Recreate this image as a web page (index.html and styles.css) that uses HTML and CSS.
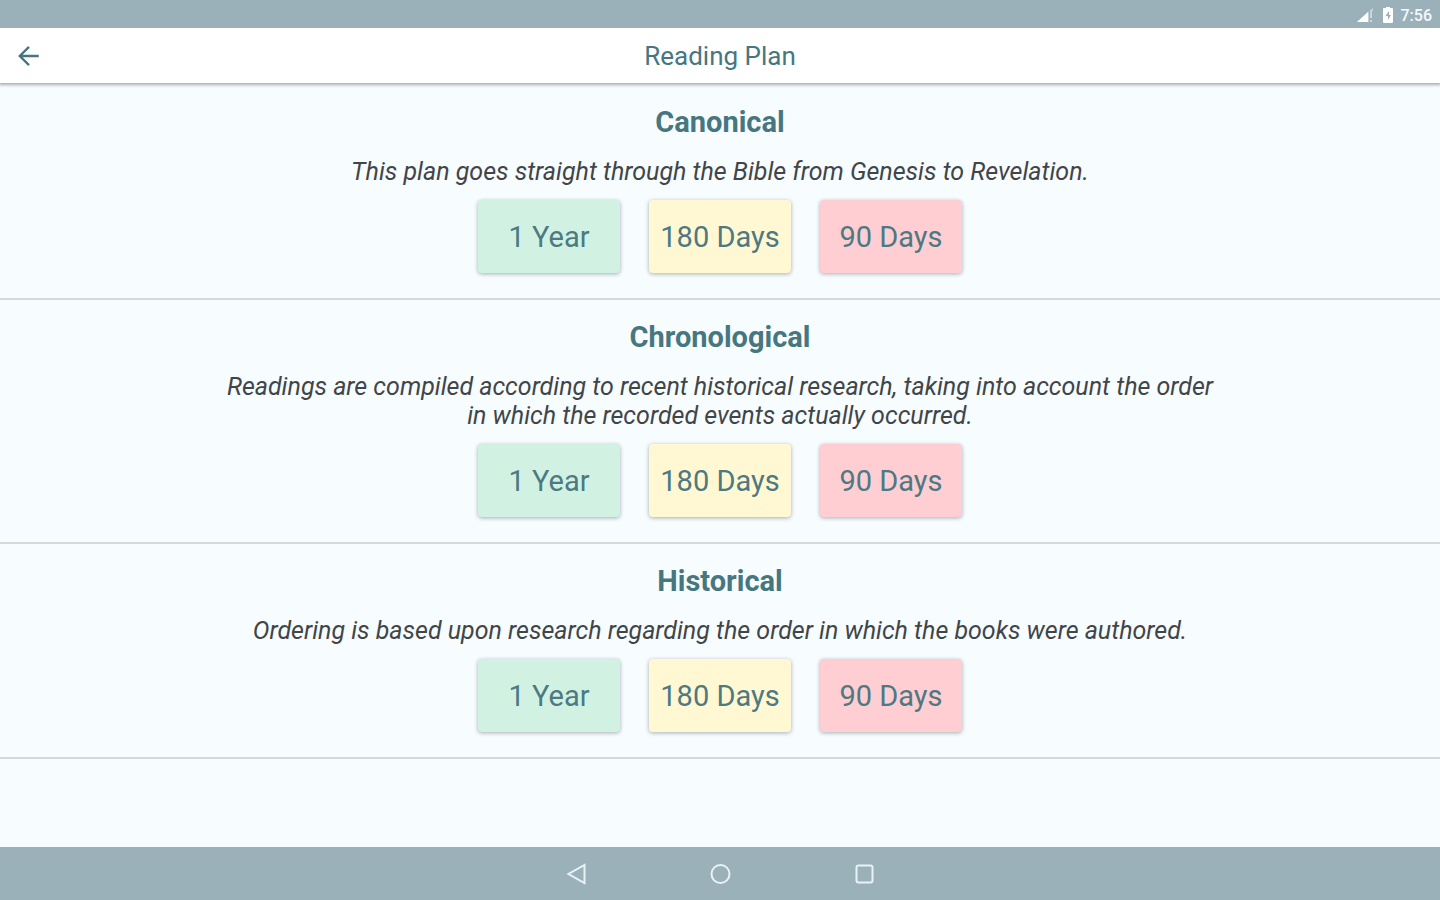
FILE: index.html
```html
<!DOCTYPE html>
<html lang="en">
<head>
<meta charset="utf-8">
<title>Reading Plan</title>
<link rel="stylesheet" href="styles.css">
</head>
<body>
<div class="status-bar">
  <svg class="signal" viewBox="0 0 18 16" aria-hidden="true"><path d="M0 15L16 1V15Z" fill="#c4d2d7"/><path d="M0 15L11 5V15Z" fill="#fff"/><path d="M12 4h5v11h-5z" fill="#9ab1b9"/><path d="M13 3h2v8h-2zM13 13h2v2h-2z" fill="#c9d7dc"/></svg>
  <svg class="battery" viewBox="0 0 12 18" aria-hidden="true"><path d="M4 1h4v1h2q1 0 1 1v13q0 1-1 1H2q-1 0-1-1V3q0-1 1-1h2z" fill="#fff"/><path d="M7 5L3.500 10H6v4l3-5H7z" fill="#9ab1b9"/></svg>
  <span>7:56</span>
</div>
<header class="app-bar">
  <button class="back" aria-label="Back"><svg viewBox="0 0 24 24" aria-hidden="true"><path d="M21 12H4M12 3.500L3.500 12L12 20.500" fill="none" stroke="currentColor" stroke-width="2.200"/></svg></button>
  <h1>Reading Plan</h1>
</header>
<main>
  <section class="plan">
    <h2>Canonical</h2>
    <p>This plan goes straight through the Bible from Genesis to Revelation.</p>
    <div class="options"><button class="year">1 Year</button><button class="half">180 Days</button><button class="quarter">90 Days</button></div>
  </section>
  <section class="plan">
    <h2>Chronological</h2>
    <p>Readings are compiled according to recent historical research, taking into account the order in which the recorded events actually occurred.</p>
    <div class="options"><button class="year">1 Year</button><button class="half">180 Days</button><button class="quarter">90 Days</button></div>
  </section>
  <section class="plan">
    <h2>Historical</h2>
    <p>Ordering is based upon research regarding the order in which the books were authored.</p>
    <div class="options"><button class="year">1 Year</button><button class="half">180 Days</button><button class="quarter">90 Days</button></div>
  </section>
</main>
<nav class="nav-bar">
  <button aria-label="Back"><svg viewBox="0 0 24 24" aria-hidden="true"><path d="M20.500 3V21L4.500 12Z"/></svg></button>
  <button aria-label="Home"><svg viewBox="0 0 24 24" aria-hidden="true"><circle cx="12.500" cy="12" r="9"/></svg></button>
  <button aria-label="Recent apps"><svg viewBox="0 0 24 24" aria-hidden="true"><rect x="4.500" y="3.500" width="16" height="17" rx="2"/></svg></button>
</nav>
</body>
</html>
```
FILE: styles.css
```css
* { box-sizing: border-box; }
body {
  margin: 0;
  min-height: 100vh;
  display: flex;
  flex-direction: column;
  background: #f7fcff;
  color: #414548;
  font-family: Roboto, "Liberation Sans", sans-serif;
}
button {
  border: 0;
  padding: 0;
  background: none;
  font: inherit;
  cursor: pointer;
}
svg { display: block; }
.status-bar {
  height: 28px;
  padding: 2px 8px 0 0;
  display: flex;
  align-items: center;
  justify-content: flex-end;
  gap: 7px;
  background: #9ab1b9;
  color: #f4f8fa;
  font-size: 16px;
  font-weight: 500;
}
.signal { width: 18px; height: 16px; }
.battery { width: 12px; height: 18px; }
.app-bar {
  height: 55px;
  padding: 0 16px;
  display: grid;
  grid-template-columns: 26px 1fr 26px;
  align-items: center;
  background: #fff;
  color: #467780;
  box-shadow: 0 1px 3px 1px #a9adb0;
  z-index: 1;
}
.back { color: inherit; }
.back svg { width: 26px; height: 26px; }
h1 {
  margin: 0;
  text-align: center;
  font-size: 26px;
  line-height: 32px;
  font-weight: 400;
}
main {
  flex: 1;
  padding-top: 2px;
}
.plan {
  padding: 19px 220px 25px;
  border-bottom: 2px solid #d3d9de;
  text-align: center;
}
h2 {
  margin: 0;
  color: #467780;
  font-size: 29px;
  line-height: 36px;
  font-weight: 700;
}
.plan p {
  margin: 17px 0 14px;
  font-size: 25px;
  line-height: 29px;
  font-style: italic;
}
.options {
  display: flex;
  justify-content: center;
  gap: 29px;
}
.options button {
  width: 142px;
  height: 73px;
  border-radius: 4px;
  color: #4d7983;
  font-size: 29px;
  box-shadow: 0 1px 4px #a4adb0;
}
.options .year { background: #d1f2e2; }
.options .half { background: #fff8d3; }
.options .quarter { background: #ffced2; }
.nav-bar {
  height: 53px;
  display: flex;
  align-items: center;
  justify-content: center;
  gap: 120px;
  background: #9ab1b9;
}
.nav-bar svg {
  width: 24px;
  height: 24px;
  fill: none;
  stroke: #e9f3f6;
  stroke-width: 2;
}
```
